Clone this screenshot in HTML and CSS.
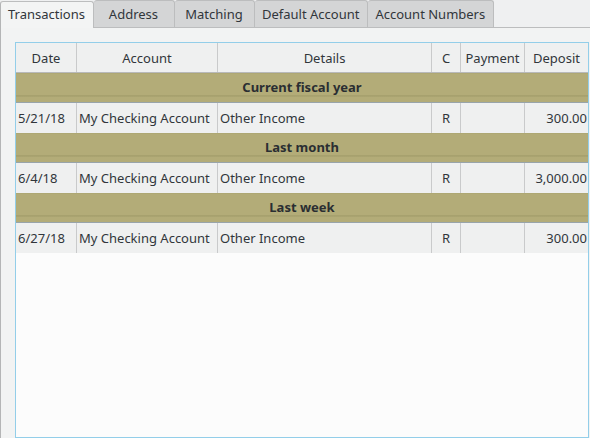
FILE: index.html
```html
<!DOCTYPE html>
<html>
<head>
<meta charset="utf-8">
<link rel="stylesheet" href="styles.css">
</head>
<body>
<div class="tabbar">
  <div class="tab active">Transactions</div>
  <div class="tab">Address</div>
  <div class="tab narrow">Matching</div>
  <div class="tab">Default Account</div>
  <div class="tab">Account Numbers</div>
</div>
<div class="pane">
  <div class="frame">
    <div class="line head">
      <div class="cell">Date</div><div class="cell">Account</div><div class="cell">Details</div><div class="cell">C</div><div class="cell">Payment</div><div class="cell">Deposit</div>
    </div>
    <div class="group">Current fiscal year</div>
    <div class="line row">
      <div class="cell">5/21/18</div><div class="cell">My Checking Account</div><div class="cell">Other Income</div><div class="cell ctr">R</div><div class="cell"></div><div class="cell num">300.00</div>
    </div>
    <div class="group">Last month</div>
    <div class="line row">
      <div class="cell">6/4/18</div><div class="cell">My Checking Account</div><div class="cell">Other Income</div><div class="cell ctr">R</div><div class="cell"></div><div class="cell num">3,000.00</div>
    </div>
    <div class="group">Last week</div>
    <div class="line row">
      <div class="cell">6/27/18</div><div class="cell">My Checking Account</div><div class="cell">Other Income</div><div class="cell ctr">R</div><div class="cell"></div><div class="cell num">300.00</div>
    </div>
  </div>
</div>
</body>
</html>
```
FILE: styles.css
```css
html, body {
  margin: 0;
  padding: 0;
  height: 100%;
  overflow: hidden;
}
body {
  background: #eff0f1;
  font-family: "Noto Sans", "DejaVu Sans", sans-serif;
  font-size: 13px;
  color: #31363b;
}
.tabbar {
  display: flex;
  height: 27px;
  align-items: stretch;
}
.tab {
  box-sizing: border-box;
  min-width: 81px;
  padding: 0 8px 0 7px;
  text-align: center;
  line-height: 26px;
  background: #d4d5d6;
  border: 1px solid #bcbdbe;
  border-bottom: none;
  border-left: none;
  border-radius: 3px 3px 0 0;
  white-space: nowrap;
}
.tab.narrow { min-width: 80px; }
.tab.active {
  background: #f3f4f4;
  border-left: 1px solid #b4b5b6;
  margin-top: 1px;
  line-height: 25px;
  height: 27px;
  position: relative;
  z-index: 1;
}
.pane {
  box-sizing: border-box;
  height: 411px;
  border-top: 1px solid #bcbdbe;
  border-left: 1px solid #b4b5b6;
  background: #f2f3f3;
  padding: 14px 0 0 14px;
}
.frame {
  box-sizing: border-box;
  width: 574px;
  height: 396px;
  border: 1px solid #93cee9;
  background: #fcfcfc;
}
.line {
  display: grid;
  grid-template-columns: 61px 141px 214px 29px 64px 63px;
  height: 30px;
  box-sizing: border-box;
}
.cell {
  box-sizing: border-box;
  border-right: 1px solid #c9cacb;
  white-space: nowrap;
  overflow: hidden;
  line-height: 30px;
}
.cell:last-child { border-right: none; }
.head {
  background: #eff0f0;
  border-bottom: 1px solid #b8b9ba;
}
.head .cell { text-align: center; }
.row { background: #eff0f0; }
.row .cell { padding-left: 2px; }
.row .cell.ctr { text-align: center; padding: 0; }
.row .cell.num { text-align: right; padding: 0 1px 0 0; }
.group {
  box-sizing: border-box;
  height: 30px;
  line-height: 29px;
  text-align: center;
  font-weight: bold;
  color: #2a2e32;
  background: linear-gradient(to bottom, #a9a36f 0px, #b3ac78 1px, #b3ac78 22px, #a6a06d 22px, #aba572 24px, #b3ac78 24px);
  border-bottom: 1px solid #98a4aa;
}
```
